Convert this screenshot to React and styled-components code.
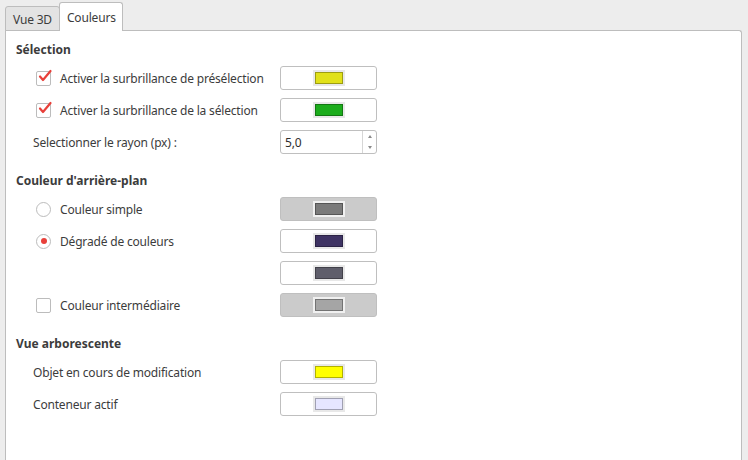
import React from 'react';
import styled, { createGlobalStyle } from 'styled-components';

const GlobalStyle = createGlobalStyle`
  html, body {
    margin: 0;
    padding: 0;
    background: #ededed;
  }
  body {
    font-family: 'Noto Sans', 'DejaVu Sans', sans-serif;
    font-size: 12px;
    letter-spacing: -0.18px;
    color: #3c3c3c;
  }
`;

const Window = styled.div`
  width: 748px;
  height: 460px;
  overflow: hidden;
  padding: 2px 6px 0 5px;
  box-sizing: border-box;
  display: flex;
  flex-direction: column;
`;

const TabBar = styled.div`
  display: flex;
  align-items: flex-end;
  height: 29px;
  margin-bottom: -1px;
  position: relative;
  z-index: 1;
`;

const Tab = styled.div`
  box-sizing: border-box;
  height: ${(p) => (p.active ? '29px' : '25px')};
  padding: ${(p) => (p.active ? '0 6px 0 7px' : '1px 7px 0 7px')};
  display: flex;
  align-items: center;
  background: ${(p) => (p.active ? '#ffffff' : '#e3e3e3')};
  border: 1px solid #bdbdbd;
  border-bottom: ${(p) => (p.active ? 'none' : '1px solid #bdbdbd')};
  border-radius: 3px 3px 0 0;
  margin-left: ${(p) => (p.active ? '-1px' : '0')};
  color: #3c3c3c;
`;

const Pane = styled.div`
  flex: 1;
  background: #ffffff;
  border: 1px solid #bdbdbd;
  border-bottom: none;
  border-radius: 0 3px 0 0;
  padding: 11px 10px 0 10px;
`;

const Section = styled.div`
  display: flex;
  flex-direction: column;
  gap: 8px;
  margin-bottom: 19px;
`;

const Header = styled.div`
  font-weight: bold;
  letter-spacing: 0;
  height: 16px;
  line-height: 16px;
`;

const Row = styled.div`
  display: grid;
  grid-template-columns: 247px 97px;
  align-items: center;
  height: 24px;
  padding-left: 17px;
`;

const Label = styled.label`
  display: flex;
  align-items: center;
  gap: 9px;
  padding-left: ${(p) => (p.boxed ? '3px' : '0')};
  white-space: nowrap;
`;

const Box = styled.span`
  position: relative;
  width: 13px;
  height: 13px;
  border: 1px solid #bcbcbc;
  border-radius: 2px;
  background: #fff;
  flex: none;
`;

const Check = styled.svg`
  position: absolute;
  left: 1px;
  top: -3px;
`;

const Radio = styled.span`
  width: 13px;
  height: 13px;
  border: 1px solid #bcbcbc;
  border-radius: 50%;
  background: #fff;
  display: flex;
  align-items: center;
  justify-content: center;
  flex: none;
  &::after {
    content: '';
    width: 6px;
    height: 6px;
    border-radius: 50%;
    background: ${(p) => (p.checked ? '#e8403a' : 'transparent')};
  }
`;

const ColorButton = styled.div`
  box-sizing: border-box;
  width: 97px;
  height: 24px;
  border: 1px solid #bfbfbf;
  border-radius: 3px;
  background: ${(p) => (p.disabled ? '#cbcbcb' : '#ffffff')};
  display: flex;
  align-items: center;
  justify-content: center;
`;

const Swatch = styled.span`
  box-sizing: border-box;
  width: 28px;
  height: 12px;
  background: ${(p) => p.color};
  border: 1px solid rgba(0, 0, 0, 0.3);
  box-shadow: 0 0 0 2px ${(p) => (p.disabled ? '#f0f0f0' : '#e8e8e8')};
`;

const Spin = styled.div`
  box-sizing: border-box;
  width: 97px;
  height: 24px;
  border: 1px solid #bfbfbf;
  border-radius: 3px;
  display: flex;
  background: #fff;
`;

const SpinText = styled.div`
  flex: 1;
  padding-left: 4px;
  display: flex;
  align-items: center;
  color: #2e2e2e;
`;

const SpinArrows = styled.div`
  width: 13px;
  border-left: 1px solid #d6d6d6;
  display: flex;
  flex-direction: column;
  align-items: center;
  justify-content: space-between;
  padding: 4px 0;
`;

const Arrow = styled.span`
  width: 0;
  height: 0;
  border-left: 2px solid transparent;
  border-right: 2px solid transparent;
  ${(p) => (p.up ? 'border-bottom: 3px solid #8a8a8a;' : 'border-top: 3px solid #8a8a8a;')}
`;

const CheckBox = ({ checked }) => (
  <Box>
    {checked && (
      <Check width="14" height="14" viewBox="0 0 14 14">
        <path d="M2 7.5 L5 11 L12.5 2" fill="none" stroke="#e8403a" strokeWidth="2.2" strokeLinecap="round" strokeLinejoin="round" />
      </Check>
    )}
  </Box>
);

const Btn = ({ color, disabled }) => (
  <ColorButton disabled={disabled}>
    <Swatch color={color} disabled={disabled} />
  </ColorButton>
);

export default function App() {
  return (
    <>
      <GlobalStyle />
      <Window>
        <TabBar>
          <Tab>Vue 3D</Tab>
          <Tab active>Couleurs</Tab>
        </TabBar>
        <Pane>
          <Section>
            <Header>Sélection</Header>
            <Row>
              <Label boxed><CheckBox checked />Activer la surbrillance de présélection</Label>
              <Btn color="#e1e11a" />
            </Row>
            <Row>
              <Label boxed><CheckBox checked />Activer la surbrillance de la sélection</Label>
              <Btn color="#1cad1c" />
            </Row>
            <Row>
              <Label>Selectionner le rayon (px) :</Label>
              <Spin>
                <SpinText>5,0</SpinText>
                <SpinArrows>
                  <Arrow up />
                  <Arrow />
                </SpinArrows>
              </Spin>
            </Row>
          </Section>
          <Section>
            <Header>Couleur d'arrière-plan</Header>
            <Row>
              <Label boxed><Radio />Couleur simple</Label>
              <Btn color="#7a7a7a" disabled />
            </Row>
            <Row>
              <Label boxed><Radio checked />Dégradé de couleurs</Label>
              <Btn color="#3e3363" />
            </Row>
            <Row>
              <span />
              <Btn color="#5f5e6b" />
            </Row>
            <Row>
              <Label boxed><CheckBox />Couleur intermédiaire</Label>
              <Btn color="#a5a5a5" disabled />
            </Row>
          </Section>
          <Section>
            <Header>Vue arborescente</Header>
            <Row>
              <Label>Objet en cours de modification</Label>
              <Btn color="#ffff00" />
            </Row>
            <Row>
              <Label>Conteneur actif</Label>
              <Btn color="#e6e6ff" />
            </Row>
          </Section>
        </Pane>
      </Window>
    </>
  );
}
